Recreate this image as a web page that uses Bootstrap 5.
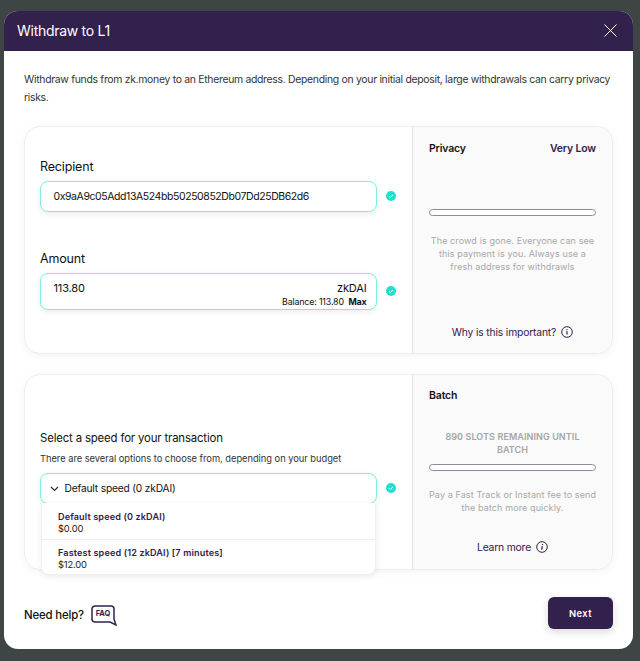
<!DOCTYPE html>
<html lang="en">
<head>
<meta charset="utf-8">
<title>Withdraw to L1</title>
<link href="https://cdn.jsdelivr.net/npm/bootstrap@5.3.0/dist/css/bootstrap.min.css" rel="stylesheet">
<style>
html,body{height:661px;overflow:hidden}
body{background:#3f4545;font-family:Inter,"Liberation Sans",sans-serif;color:#1c1c1c;padding:11px 7px 12px 4px;letter-spacing:-.01em}
.sheet{height:638px;background:#fff;border-radius:14px;overflow:hidden}
.sheet-head{height:39.5px;background:#32204d;color:#fff;padding:0 16px 0 13px;font-size:14px;font-weight:400;letter-spacing:-.02em}
.sheet-body{padding:0 20px 20px}
.intro{font-size:10.4px;line-height:18px;margin:20px 0 19px;color:#333;letter-spacing:-.028em}
.panel{border:1px solid #ededed;border-radius:16px;box-shadow:0 2px 10px rgba(0,0,0,.05);overflow:visible}
.panel-a{height:228px;margin-bottom:20px}
.panel-b{height:196px}
.pane-main{width:387px;padding:0 0 0 15px;position:relative;flex:none}
.pane-side{flex:1;background:#fafafa;border-left:1px solid #e3e3e3;border-radius:0 16px 16px 0;padding:14px 16px 0 16px;text-align:center;min-width:0}
.fld-label{font-size:12.5px;line-height:16px;color:#111;margin-bottom:6px}
.fld-row{width:337px;border:1.5px solid #7ceee0;border-radius:8px;background:#fff;box-shadow:0 2px 6px rgba(0,0,0,.08);font-size:11px;color:#111}
.fld-wrap{gap:9px}
.gap-after{margin-bottom:39px}
.tick{width:10px;height:10px;flex:none}
.r1{height:31px;padding:2px 12.5px 0;font-size:10.5px;letter-spacing:-.04em}
.r2{height:37px;padding:7.5px 9.5px 0 12.5px;line-height:15px}
.bal{font-size:8.9px;line-height:11px;letter-spacing:-.02em}
.side-title{font-size:10.5px;font-weight:600;line-height:14px;color:#141414}
.side-val{color:#32204d}
.meter{height:7px;border:1.5px solid #8b8d9c;border-radius:4px;background:#fff}
.side-note{font-size:9px;line-height:13.3px;color:#a8a8a8;letter-spacing:.012em;white-space:nowrap}
.side-link{font-size:10.3px;line-height:14px;color:#32204d;gap:5px;white-space:nowrap}
.slots{font-size:9px;font-weight:600;line-height:13.3px;color:#a5a5a5;letter-spacing:.01em;white-space:nowrap}
.hd{font-size:11.4px;line-height:15px;color:#111;margin-bottom:6px}
.sub{font-size:9.3px;line-height:14px;color:#333;margin-bottom:7px;letter-spacing:-.002em}
.r3{height:31px;padding:2px 8.5px 0;gap:6px;font-size:10.2px}
.drop{position:absolute;left:16px;top:128.5px;width:335px;height:72px;background:#fff;border:1px solid #f0f0f0;border-top:0;border-radius:0 0 8px 8px;box-shadow:0 2px 6px rgba(0,0,0,.07);z-index:2}
.opt{height:36px;padding:7.5px 16px 0;font-size:9.4px;line-height:12px;color:#222}
.opt+.opt{border-top:1px solid #ececec;height:36px;padding-top:6.5px}
.opt b{display:block;font-weight:600;color:#32204d;letter-spacing:.015em;font-size:9.1px}
.help{font-size:11.4px;font-weight:500;color:#111;gap:7px;margin-top:6px}
.go{width:65px;height:32px;background:#32204d;color:#fff;border:0;border-radius:6px;font-size:9.4px;font-weight:600;padding:3px 0 0;letter-spacing:.04em;box-shadow:0 3px 8px rgba(0,0,0,.15)}
.faq-wrap{position:relative;width:26px;height:22px}
.faq-txt{position:absolute;left:2px;top:3px;width:20px;text-align:center;font-size:7.4px;font-weight:700;line-height:12px;color:#32204d;letter-spacing:0}
</style>
</head>
<body>
<div class="sheet d-flex flex-column">
  <div class="sheet-head d-flex align-items-center justify-content-between">
    <span>Withdraw to L1</span>
    <svg width="13" height="13" viewBox="0 0 13 13" fill="none" stroke="#fff" stroke-width="1"><path d="M.5.5l12 12M12.5.5l-12 12"/></svg>
  </div>
  <div class="sheet-body d-flex flex-column flex-grow-1">
    <p class="intro">Withdraw funds from zk.money to an Ethereum address. Depending on your initial deposit, large withdrawals can carry privacy risks.</p>

    <div class="panel panel-a d-flex">
      <div class="pane-main" style="padding-top:32px">
        <div class="fld-label">Recipient</div>
        <div class="d-flex align-items-center fld-wrap gap-after">
          <div class="fld-row r1 d-flex align-items-center">0x9aA9c05Add13A524bb50250852Db07Dd25DB62d6</div>
          <svg class="tick" viewBox="0 0 10 10"><circle cx="5" cy="5" r="5" fill="#1fe0cc"/><path d="M3 5.2l1.4 1.3L7 3.9" fill="none" stroke="#fff" stroke-width="1"/></svg>
        </div>
        <div class="fld-label">Amount</div>
        <div class="d-flex align-items-center fld-wrap">
          <div class="fld-row r2">
            <div class="d-flex justify-content-between"><span>113.80</span><span>zkDAI</span></div>
            <div class="bal text-end">Balance: 113.80 &nbsp;<strong>Max</strong></div>
          </div>
          <svg class="tick" viewBox="0 0 10 10"><circle cx="5" cy="5" r="5" fill="#1fe0cc"/><path d="M3 5.2l1.4 1.3L7 3.9" fill="none" stroke="#fff" stroke-width="1"/></svg>
        </div>
      </div>
      <div class="pane-side d-flex flex-column" style="padding-top:15px">
        <div class="side-title d-flex justify-content-between"><span>Privacy</span><span class="side-val">Very Low</span></div>
        <div class="meter w-100" style="margin:53px 0 18px"></div>
        <div class="side-note">The crowd is gone. Everyone can see<br>this payment is you. Always use a<br>fresh address for withdrawls</div>
        <div class="side-link d-flex justify-content-center align-items-center" style="margin-top:52px">Why is this important?
          <svg width="12" height="12" viewBox="0 0 12 12" fill="none" stroke="#32204d"><circle cx="6" cy="6" r="5.3"/><path d="M6 5.2v3.4M6 3.2v1" stroke-width="1.2"/></svg>
        </div>
      </div>
    </div>

    <div class="panel panel-b d-flex">
      <div class="pane-main" style="padding-top:56px">
        <div class="hd">Select a speed for your transaction</div>
        <div class="sub">There are several options to choose from, depending on your budget</div>
        <div class="d-flex align-items-center fld-wrap">
          <div class="fld-row r3 d-flex align-items-center">
            <svg width="9" height="6" viewBox="0 0 9 6" fill="none" stroke="#32204d" stroke-width="1.2"><path d="M1 1l3.5 3.5L8 1"/></svg>
            <span>Default speed (0 zkDAI)</span>
          </div>
          <svg class="tick" viewBox="0 0 10 10"><circle cx="5" cy="5" r="5" fill="#1fe0cc"/><path d="M3 5.2l1.4 1.3L7 3.9" fill="none" stroke="#fff" stroke-width="1"/></svg>
        </div>
        <div class="drop">
          <div class="opt"><b>Default speed (0 zkDAI)</b>$0.00</div>
          <div class="opt"><b>Fastest speed (12 zkDAI) [7 minutes]</b>$12.00</div>
        </div>
      </div>
      <div class="pane-side d-flex flex-column">
        <div class="side-title text-start">Batch</div>
        <div class="slots" style="margin-top:27px">890 SLOTS REMAINING UNTIL<br>BATCH</div>
        <div class="meter w-100" style="margin:8px 0 17px"></div>
        <div class="side-note">Pay a Fast Track or Instant fee to send<br>the batch more quickly.</div>
        <div class="side-link d-flex justify-content-center align-items-center" style="margin-top:25px">Learn more
          <svg width="12" height="12" viewBox="0 0 12 12" fill="none" stroke="#32204d"><circle cx="6" cy="6" r="5.3"/><path d="M6.2 5.2l-.5 3.4M6.6 3l-.1 1" stroke-width="1.2"/></svg>
        </div>
      </div>
    </div>

    <div class="d-flex justify-content-between align-items-center" style="margin-top:27px">
      <div class="help d-flex align-items-center">
        <span>Need help?</span>
        <span class="faq-wrap">
          <svg width="26" height="22" viewBox="0 0 26 22" fill="none" stroke="#32204d" stroke-width="1.5"><path d="M4 1h16a3 3 0 0 1 3 3v10l2 6-6-3H4a3 3 0 0 1-3-3V4a3 3 0 0 1 3-3z"/></svg>
          <span class="faq-txt">FAQ</span>
        </span>
      </div>
      <button class="btn go" type="button">Next</button>
    </div>
  </div>
</div>
</body>
</html>
